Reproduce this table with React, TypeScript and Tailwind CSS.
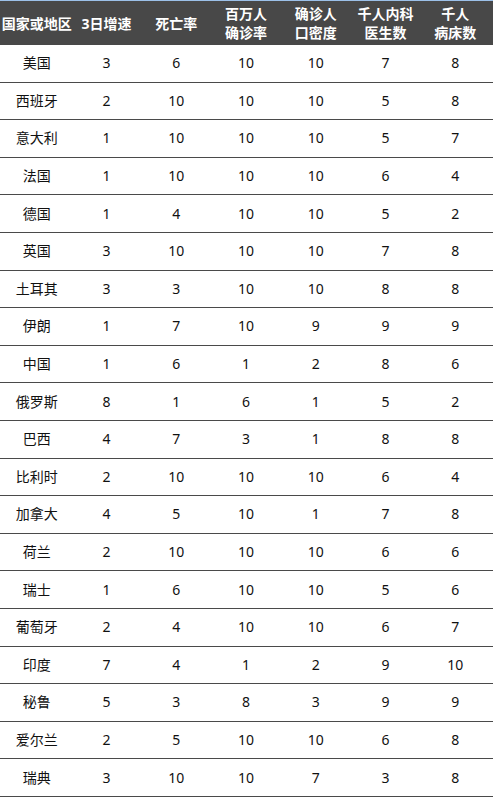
const HEADERS: string[][] = [
  ["国家或地区"],
  ["3日增速"],
  ["死亡率"],
  ["百万人", "确诊率"],
  ["确诊人", "口密度"],
  ["千人内科", "医生数"],
  ["千人", "病床数"],
];

const ROWS: [string, number, number, number, number, number, number][] = [
  ["美国", 3, 6, 10, 10, 7, 8],
  ["西班牙", 2, 10, 10, 10, 5, 8],
  ["意大利", 1, 10, 10, 10, 5, 7],
  ["法国", 1, 10, 10, 10, 6, 4],
  ["德国", 1, 4, 10, 10, 5, 2],
  ["英国", 3, 10, 10, 10, 7, 8],
  ["土耳其", 3, 3, 10, 10, 8, 8],
  ["伊朗", 1, 7, 10, 9, 9, 9],
  ["中国", 1, 6, 1, 2, 8, 6],
  ["俄罗斯", 8, 1, 6, 1, 5, 2],
  ["巴西", 4, 7, 3, 1, 8, 8],
  ["比利时", 2, 10, 10, 10, 6, 4],
  ["加拿大", 4, 5, 10, 1, 7, 8],
  ["荷兰", 2, 10, 10, 10, 6, 6],
  ["瑞士", 1, 6, 10, 10, 5, 6],
  ["葡萄牙", 2, 4, 10, 10, 6, 7],
  ["印度", 7, 4, 1, 2, 9, 10],
  ["秘鲁", 5, 3, 8, 3, 9, 9],
  ["爱尔兰", 2, 5, 10, 10, 6, 8],
  ["瑞典", 3, 10, 10, 7, 3, 8],
];

export default function App() {
  return (
    <div
      className="w-[493px] h-[797px] overflow-hidden bg-white text-[14px] text-[#111]"
      style={{ fontFamily: '"Segoe UI", "Noto Sans", "Noto Sans CJK SC", sans-serif' }}
    >
      <div className="border-t border-[#9cc0e8] bg-[#484848] h-[45px] grid grid-cols-7 pl-[2px] pr-[3px] text-white font-bold leading-[19px]">
        {HEADERS.map((h, i) => (
          <div key={i} className="flex flex-col items-center justify-center whitespace-nowrap">
            {h.map((line) => (
              <span key={line}>{line}</span>
            ))}
          </div>
        ))}
      </div>
      {ROWS.map((row) => (
        <div
          key={row[0]}
          className="h-[37.6px] grid grid-cols-7 pl-[2px] pr-[3px] border-b border-[#4a4a4a] items-center"
        >
          {row.map((cell, i) => (
            <div key={i} className="text-center leading-none">
              {cell}
            </div>
          ))}
        </div>
      ))}
    </div>
  );
}
